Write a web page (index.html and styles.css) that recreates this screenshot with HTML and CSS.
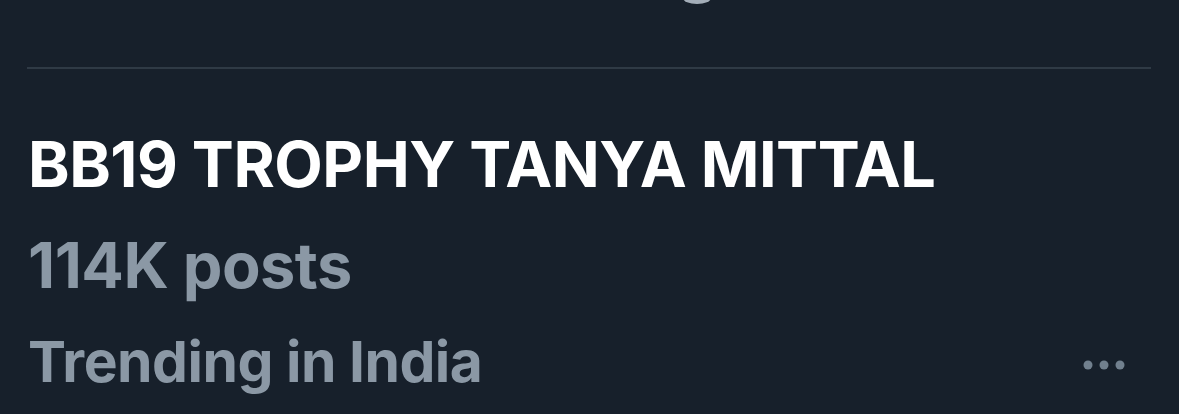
FILE: index.html
```html
<!DOCTYPE html>
<html>
<head>
<meta charset="utf-8">
<link rel="stylesheet" href="styles.css">
</head>
<body>
<div class="page">
  <div class="prev-tail"><span class="tail-shape"></span></div>
  <div class="divider"></div>
  <div class="trend">
    <div class="trend-text">
      <div class="title">BB19 TROPHY TANYA MITTAL</div>
      <div class="posts">114K posts</div>
      <div class="meta-row">
        <div class="meta">Trending in India</div>
        <div class="more">
          <svg width="42" height="10" viewBox="0 0 42 10"><circle cx="5" cy="5" r="4.5" fill="#71808e"/><circle cx="21" cy="5" r="4.5" fill="#71808e"/><circle cx="37" cy="5" r="4.5" fill="#71808e"/></svg>
        </div>
      </div>
    </div>
  </div>
</div>
</body>
</html>
```
FILE: styles.css
```css
html, body {
  margin: 0;
  padding: 0;
  background: #17202b;
}
.page {
  width: 1179px;
  height: 414px;
  overflow: hidden;
  background: #17202b;
  font-family: "Inter", "Liberation Sans", sans-serif;
}
.prev-tail {
  height: 4px;
  overflow: hidden;
  padding-left: 683px;
}
.tail-shape {
  display: block;
  width: 28px;
  height: 12px;
  margin-top: -8px;
  border-radius: 50%;
  background: #a3adb8;
}
.divider {
  margin: 63px 28px 0 27px;
  height: 2px;
  background: #2f3a45;
}
.trend {
  padding: 0 0 0 28px;
}
.title {
  color: #ffffff;
  font-weight: 700;
  font-size: 63px;
  line-height: 76px;
  margin-top: 57px;
  letter-spacing: -0.5px;
}
.posts {
  color: #8b98a5;
  font-weight: 700;
  font-size: 63px;
  line-height: 100px;
  margin-top: 13px;
  letter-spacing: -0.5px;
}
.meta-row {
  display: flex;
  align-items: center;
  justify-content: space-between;
  padding-right: 54px;
  margin-top: -1px;
}
.meta {
  color: #8b98a5;
  font-weight: 700;
  font-size: 57px;
  line-height: 96px;
  letter-spacing: -0.5px;
}
.more {
  display: flex;
  align-items: center;
  padding-top: 5px;
}
```
